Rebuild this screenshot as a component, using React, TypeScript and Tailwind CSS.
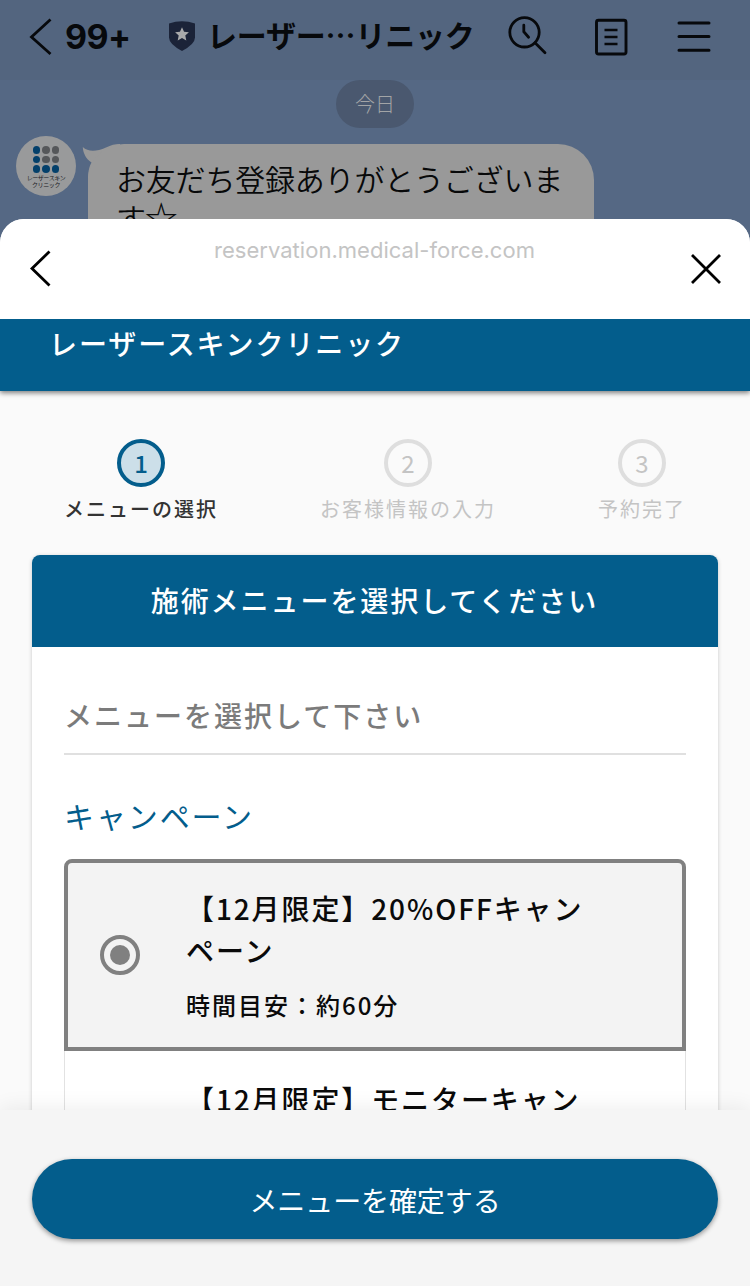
import type { ReactNode } from "react"

const steps = [
  { number: 1, label: "メニューの選択" },
  { number: 2, label: "お客様情報の入力" },
  { number: 3, label: "予約完了" },
]

const logoDots = [true, false, false, true, false, false, true, true, true]

function ChatHeader() {
  return (
    <header className="flex h-20 shrink-0 items-start bg-[#53657f] text-[#07090c]">
      <svg className="mt-[18px] ml-[29px] h-[38px] w-6" viewBox="0 0 24 38" fill="none" stroke="currentColor" strokeWidth="2.8">
        <path d="M21.5 1.5 2.5 19 21.5 36" />
      </svg>
      <span className="mt-[17px] ml-3 w-[66px] font-['Inter'] text-[34px] leading-10 font-bold tracking-[-0.6px]">99+</span>
      <svg className="mt-5 ml-[37px] h-8 w-7" viewBox="0 0 28 32">
        <path d="M1 3.5Q14-1.2 27 3.5V17.5Q27 24 14 31 1 24 1 17.5Z" fill="#1b2338" />
        <path d="m14 7.3 2.05 4.5 4.85.5-3.6 3.3 1 4.8L14 18l-4.3 2.4 1-4.8-3.6-3.3 4.85-.5Z" fill="#a9aaab" />
      </svg>
      <h1 className="mt-[14px] ml-[11px] w-[281px] text-[30px] leading-10 font-bold tracking-[-0.2px] whitespace-nowrap">レーザー…リニック</h1>
      <svg className="mt-[14px] ml-5 h-[42px] w-[42px]" viewBox="0 0 42 42" fill="none" stroke="currentColor" strokeWidth="2.8" strokeLinecap="round">
        <circle cx="16.5" cy="18.3" r="14.7" />
        <path d="m27 28.8 10 10M15.800 11.2v6.6l4.8 5.4" />
      </svg>
      <svg className="mt-[17px] ml-11 h-10 w-[34px]" viewBox="0 0 34 40" fill="none" stroke="currentColor" strokeWidth="2.9">
        <rect x="2.5" y="3.3" width="29.5" height="33.7" rx="2" />
        <path d="M10.5 13h13M10.5 20h13M10.5 27h13" strokeWidth="2.6" />
      </svg>
      <svg className="mt-5 ml-[49px] h-[34px] w-[34px]" viewBox="0 0 34 34" stroke="currentColor" strokeWidth="3" strokeLinecap="round">
        <path d="M2 3h30M2 16.500h30M2 30.300h30" />
      </svg>
    </header>
  )
}

function ClinicAvatar() {
  return (
    <div className="-mt-2 flex size-15 shrink-0 flex-col items-center rounded-full bg-[#999a9b] pt-[10px]">
      <div className="grid grid-cols-3 gap-[2px]">
        {logoDots.map((blue, i) => (
          <span key={i} className={blue ? "size-[7.5px] rounded-full bg-[#04406b]" : "size-[7.5px] rounded-full bg-[#55575a]"} />
        ))}
      </div>
      <p className="mt-px text-center text-[6px] leading-[7px] tracking-[-0.4px] whitespace-nowrap text-[#202124]">
        レーザースキン
        <br />
        クリニック
      </p>
    </div>
  )
}

function Chat() {
  return (
    <div className="flex h-[219px] shrink-0 flex-col overflow-hidden">
      <ChatHeader />
      <div className="mx-auto flex h-12 w-[78px] shrink-0 items-center justify-center rounded-full bg-[#4a586f] text-xl font-light text-[#a2a4a6]">
        今日
      </div>
      <div className="mt-4 flex pl-4">
        <ClinicAvatar />
        {/* Speech bubble tail */}
        <svg className="-mr-[34px] ml-1.5 h-9 w-10 shrink-0" viewBox="0 0 40 36" fill="#999">
          <path d="M.8 3C6 8 14 8 24 3.5 29 1 33 0 38 0V20L6 36C6 28 7 23 9.500 18.500 4 15 1 9 .8 3Z" />
        </svg>
        <div className="h-[120px] w-[506px] rounded-[36px] bg-[#999] pt-[15px] pl-7 text-[30px] leading-[38px] font-[350] tracking-[-0.2px] text-[#08090a]">
          <p>お友だち登録ありがとうございま</p>
          <p>
            す<span className="-ml-px text-[33px] font-medium">☆</span>
          </p>
        </div>
      </div>
    </div>
  )
}

function Stepper() {
  return (
    <ol className="flex justify-between px-16 pt-12 pb-8">
      {steps.map(({ number, label }) => (
        <li key={number} className={number === 1 ? "flex flex-col items-center text-[#333]" : "flex flex-col items-center text-[#c4c4c4]"}>
          <span
            className={
              number === 1
                ? "flex size-12 items-center justify-center rounded-full border-4 border-[#035d8c] bg-[#ccdfe9] text-2xl font-medium text-[#035d8c]"
                : "flex size-12 items-center justify-center rounded-full border-4 border-[#dedede] text-2xl"
            }
          >
            {number}
          </span>
          <span className={number === 1 ? "mt-2 text-xl leading-7 font-medium tracking-[2px]" : "mt-2 text-xl leading-7 tracking-[2px]"}>{label}</span>
        </li>
      ))}
    </ol>
  )
}

function MenuOption({ selected = false, children }: { selected?: boolean; children: ReactNode }) {
  return (
    <div
      className={
        selected
          ? "flex h-48 items-center rounded-t-lg border-4 border-[#808080] bg-[#f3f3f3] pl-8"
          : "flex h-48 items-start border-x border-[#e2e2e2] bg-white pt-[27px] pl-[35px]"
      }
    >
      <span className={selected ? "flex size-10 items-center justify-center rounded-full border-4 border-[#808080]" : "size-10"}>
        {selected && <span className="size-5 rounded-full bg-[#808080]" />}
      </span>
      <div className="ml-[46px] text-[#0a0a0a]">{children}</div>
    </div>
  )
}

export default function App() {
  return (
    <div className="flex h-[1286px] w-[750px] flex-col overflow-hidden bg-[#556884] font-['Noto_Sans_CJK_JP',sans-serif]">
      <Chat />

      {/* In-app browser sheet */}
      <section className="flex min-h-0 flex-1 flex-col overflow-hidden rounded-t-[24px] bg-[#fafafa]">
        <div className="z-20 flex h-[100px] shrink-0 items-start justify-between bg-white pr-7 pl-[29px] text-black">
          <svg className="mt-[30px] h-[38px] w-[30px]" viewBox="0 0 30 38" fill="none" stroke="currentColor" strokeWidth="2.8">
            <path d="M20.5 2.5 3 19.5 20.5 36.5" />
          </svg>
          <span className="mt-[17px] font-['Inter'] text-[22px] leading-7 tracking-[0.02px] text-[#c4c4c4]">reservation.medical-force.com</span>
          <svg className="mt-[34px] h-8 w-8" viewBox="0 0 32 32" fill="none" stroke="currentColor" strokeWidth="2.8">
            <path d="m2 2 28 28M30 2 2 30" />
          </svg>
        </div>

        <div className="z-10 h-[72px] shrink-0 bg-[#035d8c] pt-1 pl-[49px] text-[28px] leading-10 font-medium tracking-[1.9px] text-white shadow-[0_2px_5px_rgba(0,0,0,0.5)]">
          レーザースキンクリニック
        </div>

        <main className="min-h-0 flex-1 overflow-hidden">
          <Stepper />
          <div className="mx-8 h-[700px] rounded-t-lg bg-white shadow-[0_1px_4px_rgba(0,0,0,0.2)]">
            <h2 className="flex h-[92px] items-center justify-center rounded-t-lg bg-[#035d8c] pr-px pb-[3px] text-[28px] font-medium tracking-[1.95px] text-white">
              施術メニューを選択してください
            </h2>
            <div className="px-8 pt-12">
              <p className="h-[60px] border-b-2 border-[#e0e0e0] text-[28px] leading-10 font-medium tracking-[2px] text-[#7b7b7b]">メニューを選択して下さい</p>
              <h3 className="mt-10 mb-6 text-[30px] leading-10 tracking-[1.9px] text-[#035d8c]">キャンペーン</h3>
              <MenuOption selected>
                <p className="text-[28px] leading-[42px] font-medium tracking-[1.9px]">
                  【12月限定】20%OFFキャン
                  <br />
                  ペーン
                </p>
                <p className="mt-4 text-2xl leading-9 font-medium tracking-[2px]">時間目安：約60分</p>
              </MenuOption>
              <MenuOption>
                <p className="text-[28px] leading-[42px] font-medium tracking-[1.9px]">
                  【12月限定】モニターキャン
                  <br />
                  ペーン
                </p>
              </MenuOption>
            </div>
          </div>
        </main>

        <footer className="z-10 h-44 shrink-0 bg-[#f5f5f5] px-8 pt-[49px] shadow-[0_-2px_20px_rgba(0,0,0,0.07)]">
          <button className="flex h-20 w-full items-center justify-center rounded-full bg-[#035d8c] pt-0.5 text-[28px] tracking-[-0.1px] text-white shadow-[0_2px_5px_rgba(0,0,0,0.4)]">
            メニューを確定する
          </button>
        </footer>
      </section>
    </div>
  )
}
